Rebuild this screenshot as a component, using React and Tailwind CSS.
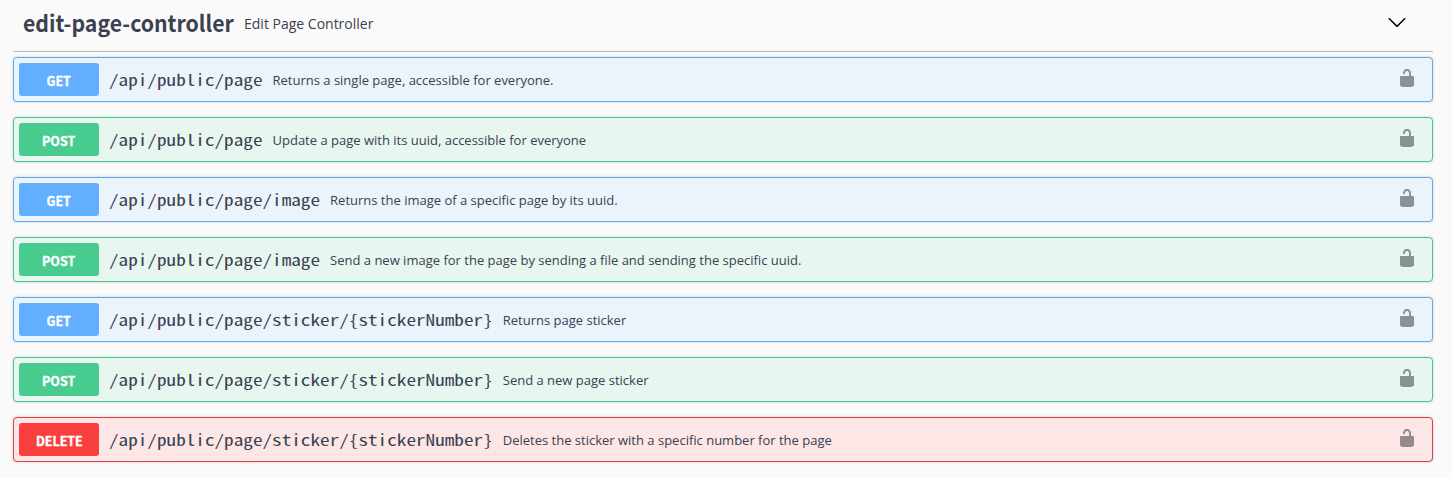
const STYLES = {
  GET: { box: 'border-[#61a9ea] bg-[#ebf3fb]', badge: 'bg-[#61affe]' },
  POST: { box: 'border-[#49c48e] bg-[#e8f6f0]', badge: 'bg-[#49cc90]' },
  DELETE: { box: 'border-[#e04048] bg-[#fce6e6]', badge: 'bg-[#f93e3e]' },
};

const OPERATIONS = [
  ['GET', '/api/public/page', 'Returns a single page, accessible for everyone.'],
  ['POST', '/api/public/page', 'Update a page with its uuid, accessible for everyone'],
  ['GET', '/api/public/page/image', 'Returns the image of a specific page by its uuid.'],
  ['POST', '/api/public/page/image', 'Send a new image for the page by sending a file and sending the specific uuid.'],
  ['GET', '/api/public/page/sticker/{stickerNumber}', 'Returns page sticker'],
  ['POST', '/api/public/page/sticker/{stickerNumber}', 'Send a new page sticker'],
  ['DELETE', '/api/public/page/sticker/{stickerNumber}', 'Deletes the sticker with a specific number for the page'],
];

function UnlockedIcon() {
  return (
    <svg className="mr-[10px] mb-[3px] h-5 w-5 shrink-0 opacity-40" viewBox="0 0 20 20">
      <path d="M15.8 8H14V5.6C14 2.703 12.665 1 10 1 7.334 1 6 2.703 6 5.6V6h2v-.801C8 3.754 8.797 3 10 3c1.203 0 2 .754 2 2.199V8H4c-.553 0-1 .646-1 1.199V17c0 .549.428 1.139.951 1.307l1.197.387C5.672 18.861 6.55 19 7.1 19h5.8c.549 0 1.428-.139 1.951-.307l1.196-.387c.524-.167.953-.757.953-1.306V9.199C17 8.646 16.352 8 15.8 8z" />
    </svg>
  );
}

function Operation({ method, path, summary }) {
  const style = STYLES[method];
  return (
    <div className={`flex h-[45px] items-center rounded border p-[5px] shadow-[0_0_3px_rgba(0,0,0,0.19)] ${style.box}`}>
      <span className={`flex h-[33px] w-20 shrink-0 items-center justify-center rounded-[3px] font-['Noto_Sans_CJK_SC','Open_Sans',sans-serif] text-sm leading-none font-bold text-white [text-shadow:0_1px_0_rgba(0,0,0,0.1)] ${style.badge}`}>
        <span className="scale-x-[0.89] scale-y-[0.92] [-webkit-text-stroke:0.4px_white]">{method}</span>
      </span>
      <span className="scale-y-[0.8] px-[10px] pt-[2px] font-['Noto_Sans_Mono_CJK_SC','DejaVu_Sans_Mono',monospace] text-[19.2px] leading-none whitespace-nowrap text-[#3b4151]">
        {path}
      </span>
      <span className="flex-1 pt-[2px] font-['Open_Sans',sans-serif] text-[13px] leading-none text-[#3b4151]">{summary}</span>
      <UnlockedIcon />
    </div>
  );
}

export default function App() {
  return (
    <main className="h-[478px] overflow-hidden bg-[#fafafa] pr-[19px] pl-[13px]">
      <header className="flex h-[52px] items-center border-b border-[#3b4151]/35 pr-[26px] pb-1 pl-[10px] text-[#3b4151]">
        <h2 className="w-[211px] origin-left scale-x-[0.885] scale-y-[0.94] pb-[2px] font-['Noto_Sans_CJK_SC','Open_Sans',sans-serif] text-2xl leading-none font-bold whitespace-nowrap">
          edit-page-controller
        </h2>
        <p className="flex-1 pl-[10px] font-['Open_Sans',sans-serif] text-sm leading-none">Edit Page Controller</p>
        <svg className="mb-[3px] h-5 w-5" viewBox="0 0 20 20">
          <path d="M17.418 6.109c.272-.268.709-.268.979 0s.271.701 0 .969l-7.908 7.83c-.27.268-.707.268-.979 0l-7.908-7.83c-.27-.268-.27-.701 0-.969.271-.268.709-.268.979 0L10 13.25l7.418-7.141z" />
        </svg>
      </header>
      <div className="flex flex-col gap-[15px] pt-[5px]">
        {OPERATIONS.map(([method, path, summary]) => (
          <Operation key={method + path} method={method} path={path} summary={summary} />
        ))}
      </div>
    </main>
  );
}
